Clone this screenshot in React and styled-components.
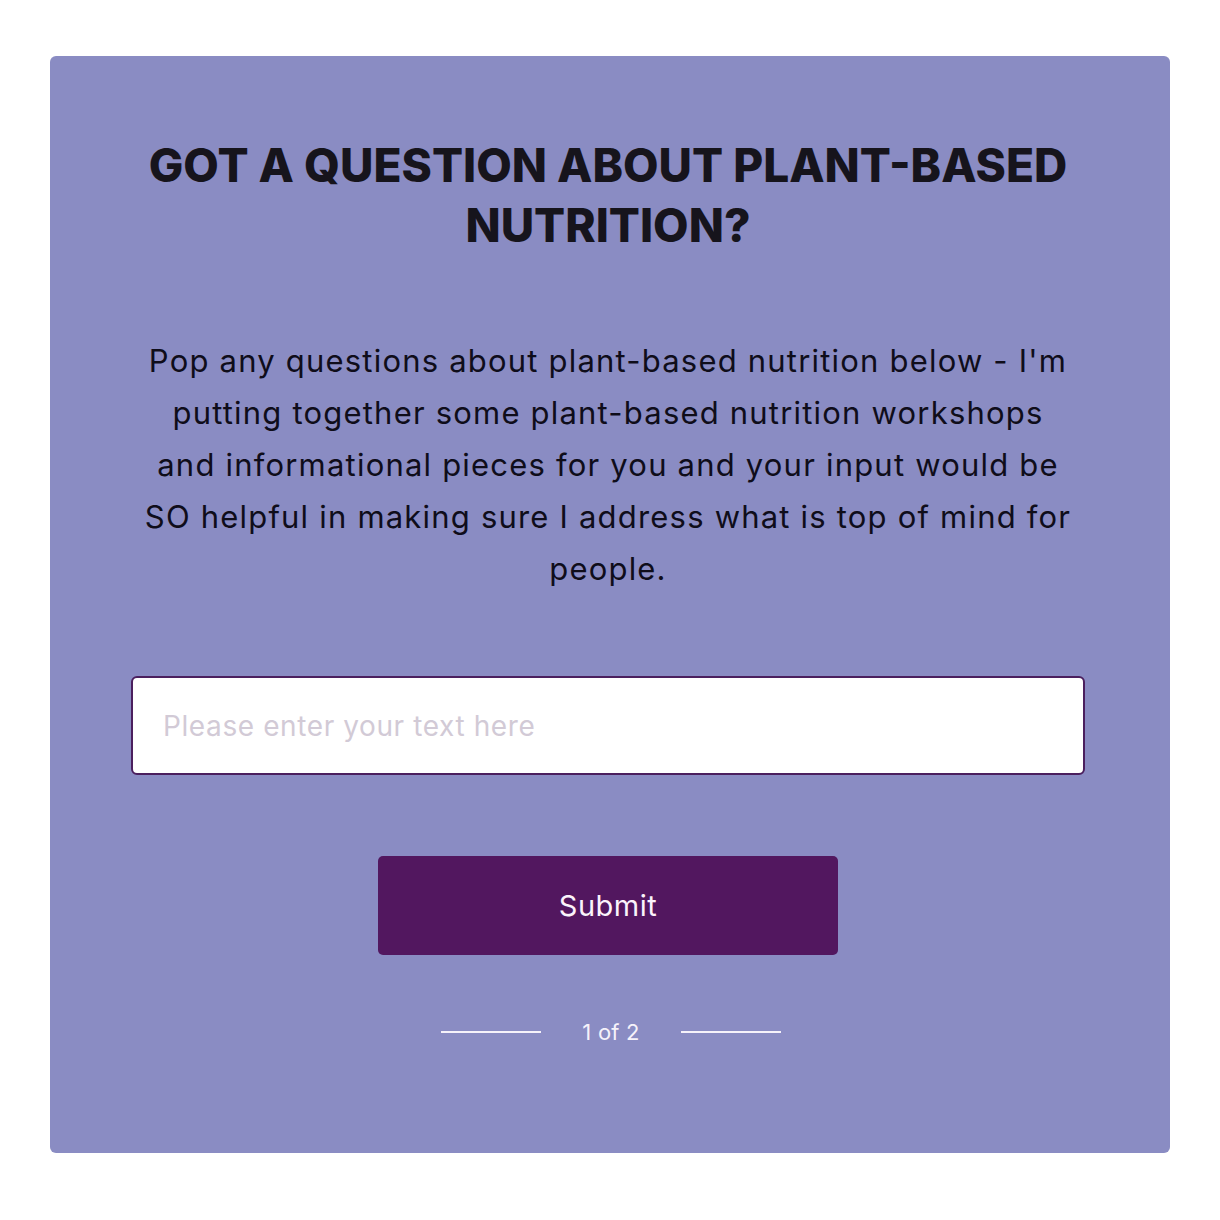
import React from "react";
import styled, { createGlobalStyle } from "styled-components";

const Global = createGlobalStyle`
  body {
    margin: 0;
    background: #ffffff;
    font-family: "Inter", "Noto Sans", sans-serif;
  }
`;

const Page = styled.div`
  padding: 56px 50px 68px;
`;

const Card = styled.section`
  background: #8a8cc3;
  border-radius: 6px;
  padding: 79px 85px 108px 81px;
  display: flex;
  flex-direction: column;
  align-items: center;
`;

const Title = styled.h2`
  margin: 0;
  font-size: 46px;
  line-height: 60px;
  font-weight: 800;
  color: #16141c;
  text-align: center;
`;

const Intro = styled.p`
  margin: 80px 0 0;
  font-size: 31px;
  line-height: 52px;
  letter-spacing: 1.2px;
  color: #0f0d1a;
  text-align: center;
`;

const Form = styled.form`
  width: 100%;
  display: flex;
  flex-direction: column;
  align-items: center;
  margin-top: 81px;
`;

const TextInput = styled.input`
  box-sizing: border-box;
  width: 100%;
  height: 99px;
  border: 2px solid #4b1f5e;
  border-radius: 6px;
  background: #fff;
  padding: 0 30px;
  font-family: inherit;
  font-size: 28px;
  letter-spacing: 0.6px;
  color: #222;
  outline: none;

  &::placeholder {
    color: #d2cad6;
  }
`;

const Button = styled.button`
  margin-top: 81px;
  width: 460px;
  height: 99px;
  border: none;
  border-radius: 5px;
  background: #52175f;
  color: #fbf3fb;
  font-family: inherit;
  font-size: 29px;
  letter-spacing: 0.5px;
  cursor: pointer;
`;

const Pager = styled.div`
  margin: 64px 0 0 6px;
  display: flex;
  align-items: center;
  gap: 41px;
  color: #f6f2fa;
  font-size: 22px;
  letter-spacing: 0.2px;
`;

const Rule = styled.span`
  width: 100px;
  height: 2px;
  background: #f6f2fa;
`;

export default function App() {
  return (
    <Page>
      <Global />
      <Card>
        <Title>
          GOT A QUESTION ABOUT PLANT-BASED
          <br />
          NUTRITION?
        </Title>
        <Intro>
          Pop any questions about plant-based nutrition below - I'm
          <br />
          putting together some plant-based nutrition workshops
          <br />
          and informational pieces for you and your input would be
          <br />
          SO helpful in making sure I address what is top of mind for
          <br />
          people.
        </Intro>
        <Form onSubmit={(e) => e.preventDefault()}>
          <TextInput type="text" placeholder="Please enter your text here" />
          <Button type="submit">Submit</Button>
        </Form>
        <Pager>
          <Rule />
          <span>1 of 2</span>
          <Rule />
        </Pager>
      </Card>
    </Page>
  );
}
